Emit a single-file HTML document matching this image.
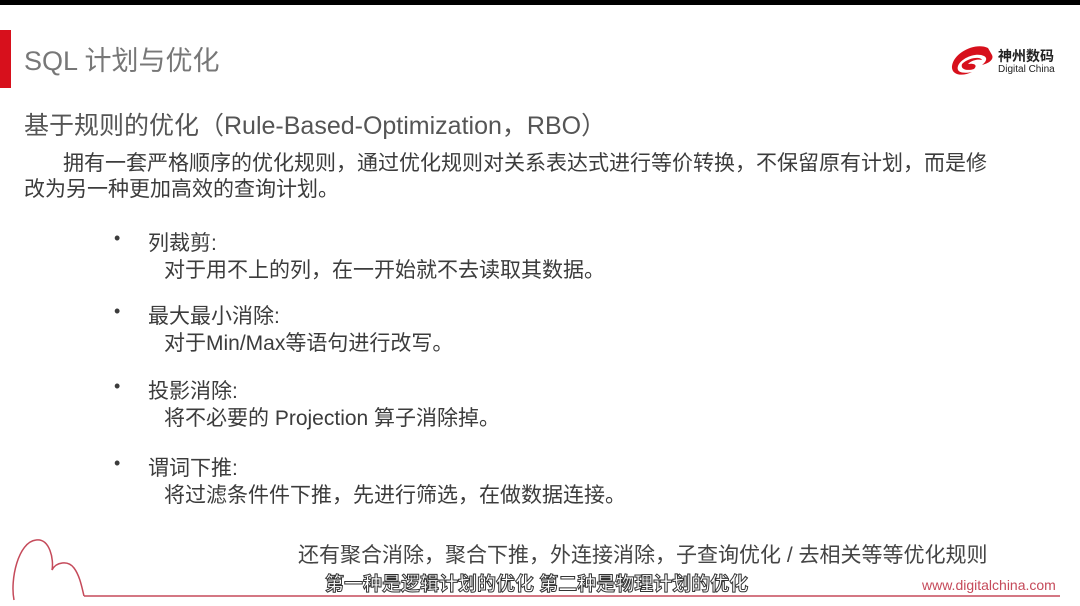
<!DOCTYPE html><html><head><meta charset="utf-8"><style>
body{margin:0;width:1080px;height:606px;background:#fff;position:relative;overflow:hidden;font-family:"Liberation Sans","Noto Sans CJK SC",sans-serif;color:#3c3c3c}
.a{position:absolute;white-space:nowrap}
</style></head><body>
<div class="a" style="left:0;top:0;width:1080px;height:5px;background:#000"></div>
<div class="a" style="left:0;top:30px;width:11px;height:58px;background:#d7101c"></div>
<div class="a" style="left:24px;top:39px;font-size:27px;color:#777">SQL 计划与优化</div>
<svg class="a" style="left:948px;top:44px" width="48" height="34" viewBox="0 0 48 34"><path d="M40 4C28-2 6 8 4 22c-1 9 10 11 20 6-10 2-16 0-14-6 3-8 18-14 26-10 4 2 2 6-2 9 8-2 12-6 10-10z" fill="#d7101c"/><path d="M14 20c6-6 18-8 20-4-4-1-10 0-14 4 6-1 10 1 6 5-6 2-14 1-12-5z" fill="#d7101c"/></svg>
<div class="a" style="left:998px;top:46px;font-size:14px;color:#222;font-weight:bold">神州数码</div>
<div class="a" style="left:998px;top:64px;font-size:10px;color:#222">Digital China</div>
<div class="a" style="left:24px;top:106px;font-size:25px;color:#555">基于规则的优化（Rule-Based-Optimization，RBO）</div>
<div class="a" style="left:63px;top:147px;font-size:21px">拥有一套严格顺序的优化规则，通过优化规则对关系表达式进行等价转换，不保留原有计划，而是修</div>
<div class="a" style="left:24px;top:173px;font-size:21px">改为另一种更加高效的查询计划。</div>
<div class="a" style="left:114px;top:228px;font-size:18px">•</div><div class="a" style="left:148px;top:227px;font-size:21px">列裁剪:</div>
<div class="a" style="left:164px;top:254px;font-size:21px">对于用不上的列，在一开始就不去读取其数据。</div>
<div class="a" style="left:114px;top:301px;font-size:18px">•</div><div class="a" style="left:148px;top:300px;font-size:21px">最大最小消除:</div>
<div class="a" style="left:164px;top:327px;font-size:21px">对于Min/Max等语句进行改写。</div>
<div class="a" style="left:114px;top:376px;font-size:18px">•</div><div class="a" style="left:148px;top:375px;font-size:21px">投影消除:</div>
<div class="a" style="left:164px;top:402px;font-size:21px">将不必要的 Projection 算子消除掉。</div>
<div class="a" style="left:114px;top:453px;font-size:18px">•</div><div class="a" style="left:148px;top:452px;font-size:21px">谓词下推:</div>
<div class="a" style="left:164px;top:479px;font-size:21px">将过滤条件件下推，先进行筛选，在做数据连接。</div>
<svg class="a" style="left:0;top:530px" width="1080" height="76"><path d="M14 70C10 50 18 12 36 10c14-2 18 20 16 30 4-8 16-10 22-2 6 8 8 20 10 28 M84 66 L1060 66" fill="none" stroke="#c54a5a" stroke-width="1.5"/></svg>
<div class="a" style="left:298px;top:539px;font-size:21px;color:#444">还有聚合消除，聚合下推，外连接消除，子查询优化 / 去相关等等优化规则</div>
<div class="a" style="left:325px;top:569px;font-size:19px;color:#fff;font-weight:bold;-webkit-text-stroke:1px #333">第一种是逻辑计划的优化 第二种是物理计划的优化</div>
<div class="a" style="left:922px;top:577px;font-size:14px;color:#c54a5a">www.digitalchina.com</div>
</body></html>
